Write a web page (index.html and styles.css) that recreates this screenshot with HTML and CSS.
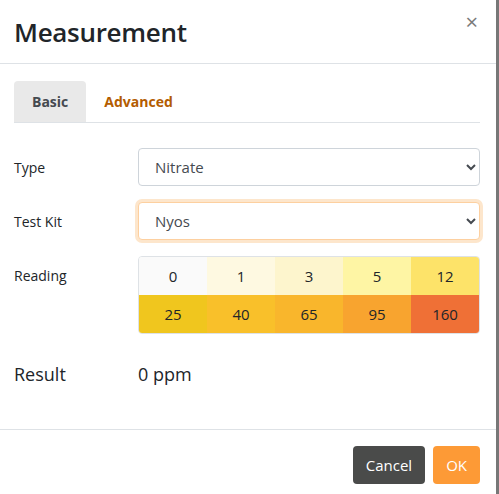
FILE: index.html
```html
<!DOCTYPE html>
<html>
<head>
    <title>Measurement</title>
    <link rel="stylesheet" href="styles.css">
</head>
<body>
    <div class="modal">
        <div class="modal-header">
            <h1 class="modal-title">Measurement</h1>
            <button class="close">&times;</button>
        </div>
        <div class="modal-body">
            <ul class="tabs">
                <li class="tab active">Basic</li>
                <li class="tab">Advanced</li>
            </ul>
            <div class="row">
                <label for="type">Type</label>
                <select id="type" class="select">
                    <option>Nitrate</option>
                </select>
            </div>
            <div class="row">
                <label for="kit">Test Kit</label>
                <select id="kit" class="select focused">
                    <option>Nyos</option>
                </select>
            </div>
            <div class="row reading-row">
                <label>Reading</label>
                <div class="scale">
                    <div class="cell c0">0</div>
                    <div class="cell c1">1</div>
                    <div class="cell c2">3</div>
                    <div class="cell c3">5</div>
                    <div class="cell c4">12</div>
                    <div class="cell c5">25</div>
                    <div class="cell c6">40</div>
                    <div class="cell c7">65</div>
                    <div class="cell c8">95</div>
                    <div class="cell c9">160</div>
                </div>
            </div>
            <div class="row result-row">
                <span class="result-label">Result</span>
                <span class="result-value">0 ppm</span>
            </div>
        </div>
        <div class="modal-footer">
            <button class="btn btn-cancel">Cancel</button>
            <button class="btn btn-ok">OK</button>
        </div>
    </div>
</body>
</html>
```

FILE: styles.css
```css
body {
    margin: 0;
    background-color: #777;
    font-family: "Open Sans", "Noto Sans", sans-serif;
    color: #212529;
}

.modal {
    width: 496px;
    height: 494px;
    background-color: #fff;
    display: flex;
    flex-direction: column;
}

.modal-header {
    height: 64px;
    box-sizing: border-box;
    border-bottom: 1px solid #dee2e6;
    display: flex;
    align-items: center;
    justify-content: space-between;
    padding: 0 18px 0 14px;
}

.modal-title {
    margin: 0;
    font-size: 26px;
    font-weight: 600;
    color: #212529;
    letter-spacing: -0.3px;
}

.close {
    border: none;
    background: none;
    font-size: 22px;
    color: #7a7a7a;
    padding: 0;
    margin-top: -22px;
    cursor: pointer;
    font-family: "Open Sans", sans-serif;
}

.modal-body {
    flex: 1;
    padding: 17px 16px 0 14px;
}

.tabs {
    list-style: none;
    margin: 0 0 25px;
    padding: 0;
    display: flex;
    border-bottom: 1px solid #dee2e6;
}

.tab {
    height: 41px;
    box-sizing: border-box;
    display: flex;
    align-items: center;
    padding: 0 18px;
    font-size: 14px;
    font-weight: 700;
    color: #b35c00;
    border-radius: 4px 4px 0 0;
}

.tab.active {
    background-color: #e9e9e9;
    color: #454a50;
}

.row {
    display: flex;
    align-items: center;
    margin-bottom: 16px;
}

.row label {
    width: 124px;
    font-size: 14px;
    color: #212529;
}

.select {
    flex: 1;
    height: 38px;
    border: 1px solid #ced4da;
    border-radius: 4px;
    background-color: #fff;
    padding: 0 12px;
    font-family: "Open Sans", sans-serif;
    font-size: 15px;
    color: #454a50;
}

.select.focused {
    border-color: #fdd0a0;
    box-shadow: 0 0 0 3px #fde6cc;
    outline: none;
}

.reading-row {
    align-items: flex-start;
}

.reading-row label {
    padding-top: 10px;
}

.scale {
    flex: 1;
    display: grid;
    grid-template-columns: repeat(5, 1fr);
    border: 1px solid #dee2e6;
    border-radius: 4px;
    overflow: hidden;
}

.cell {
    height: 38px;
    display: flex;
    align-items: center;
    justify-content: center;
    font-size: 15px;
}

.c0 { background-color: #fafafa; }
.c1 { background-color: #fef9e1; }
.c2 { background-color: #fdf5cd; }
.c3 { background-color: #fef5a4; }
.c4 { background-color: #fde369; }
.c5 { background-color: #f0c61e; }
.c6 { background-color: #f9c02a; }
.c7 { background-color: #f9b62c; }
.c8 { background-color: #f8a42f; }
.c9 { background-color: #ef7036; }

.result-row {
    margin-top: 28px;
    font-size: 18px;
}

.result-label {
    width: 124px;
}

.modal-footer {
    height: 65px;
    box-sizing: border-box;
    border-top: 1px solid #dee2e6;
    display: flex;
    justify-content: flex-end;
    align-items: flex-start;
    gap: 8px;
    padding: 16px 16px 0;
}

.btn {
    height: 38px;
    border: none;
    border-radius: 4px;
    padding: 0 13px;
    font-family: "Open Sans", sans-serif;
    font-size: 15px;
    color: #fff;
    cursor: pointer;
}

.btn-cancel {
    background-color: #4a4b4a;
}

.btn-ok {
    background-color: #fd9a36;
}
```
